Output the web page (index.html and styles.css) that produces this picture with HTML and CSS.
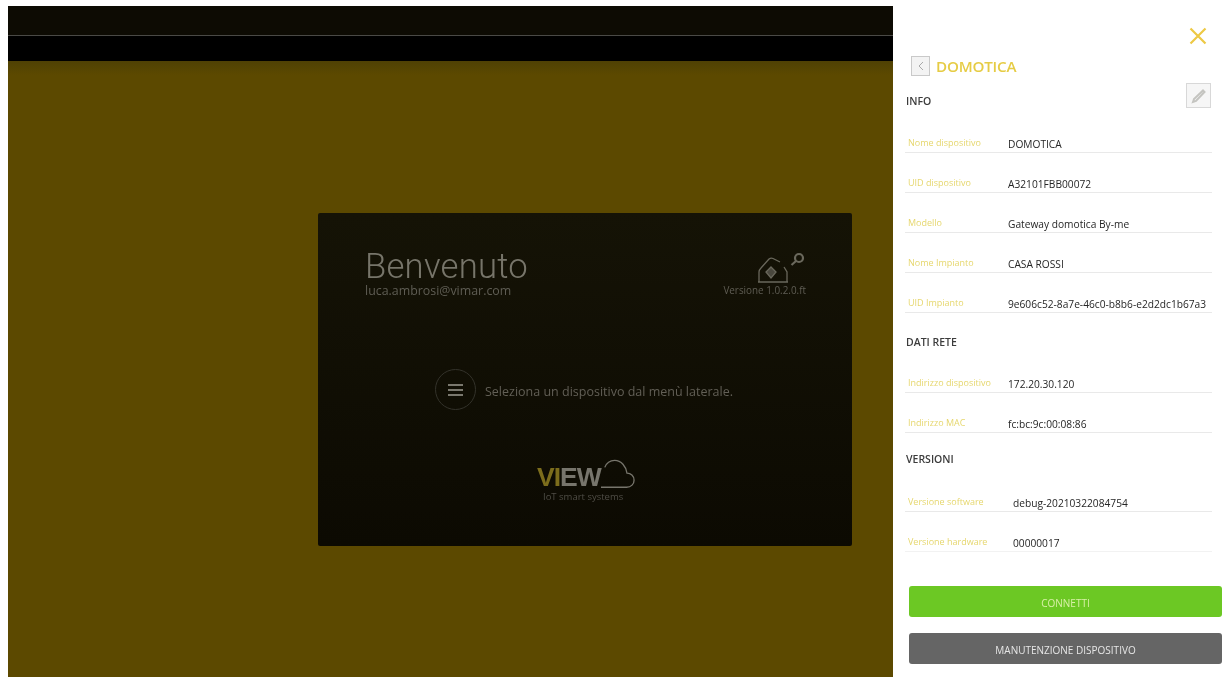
FILE: index.html
```html
<!DOCTYPE html>
<html lang="it">

<head>
    <meta charset="utf-8" />
    <title>VIEW - DOMOTICA</title>
    <link rel="stylesheet" href="styles.css">
</head>

<body>
    <div class="shell">
        <div class="main">
            <div class="topbar">
                <div class="topbar-upper"></div>
                <div class="topbar-lower"></div>
            </div>
            <div class="stage">
                <div class="welcome">
                    <div class="welcome-head">
                        <div class="welcome-user">
                            <h1>Benvenuto</h1>
                            <div class="email">luca.ambrosi@vimar.com</div>
                        </div>
                        <div class="welcome-version">
                            <svg class="home-icon" width="48" height="34" viewBox="0 0 48 34" fill="none" stroke="#6a685c" stroke-width="1.3">
                                <path d="M1 32 H31 M2 32 V22 Q2 20 4 18 L12 9 Q14 7.5 16 8.5 L23 12 M30 32 V22 L27 17" />
                                <path d="M14 17 L19 22 L14 28 L9 22 Z" fill="#4a483e" />
                                <path d="M34.5 15 L39 11" stroke-width="2.2" />
                                <circle cx="42" cy="8" r="4" stroke-width="2.2" />
                            </svg>
                            <div class="version-text">Versione 1.0.2.0.ft</div>
                        </div>
                    </div>
                    <div class="hint">
                        <div class="menu-circle">
                            <span></span>
                            <span></span>
                            <span></span>
                        </div>
                        <div class="hint-text">Seleziona un dispositivo dal menù laterale.</div>
                    </div>
                    <div class="logo">
                        <div class="logo-mark">
                            <div class="logo-word"><span class="logo-vi">VI</span>EW</div>
                            <svg class="logo-cloud" width="34" height="32" viewBox="0 0 36 32" fill="none" stroke="#77756c" stroke-width="1.4">
                                <path d="M0 30 H27 C32 30 35 26.5 35 22.5 C35 18 31.5 15 27.5 15 C26.5 8 21.5 1.5 14.5 1.5 C9 1.5 5.5 5 4 9" />
                            </svg>
                        </div>
                        <div class="logo-sub">IoT smart systems</div>
                    </div>
                </div>
            </div>
        </div>

        <div class="panel">
            <div class="panel-close">
                <svg width="18" height="18" viewBox="0 0 18 18" stroke="#edc945" stroke-width="2.2" fill="none">
                    <path d="M1.5 1.5 L16.5 16.5 M16.5 1.5 L1.5 16.5" />
                </svg>
            </div>
            <div class="panel-title">
                <div class="back-btn">
                    <svg width="8" height="10" viewBox="0 0 8 10" fill="none" stroke="#a9a9a9" stroke-width="1">
                        <path d="M6 1 L2 5 L6 9" />
                    </svg>
                </div>
                <h2>DOMOTICA</h2>
            </div>
            <div class="section section-info">
                <span>INFO</span>
                <div class="edit-btn">
                    <svg width="16" height="16" viewBox="0 0 16 16" fill="none" stroke="#c4c4c0" stroke-width="2">
                        <path d="M2 14 L3 11 L12 2.5 L13.5 4 L5 13 Z" />
                    </svg>
                </div>
            </div>

            <div class="row"><div class="label">Nome dispositivo</div><div class="value">DOMOTICA</div></div>
            <div class="row"><div class="label">UID dispositivo</div><div class="value">A32101FBB00072</div></div>
            <div class="row"><div class="label">Modello</div><div class="value">Gateway domotica By-me</div></div>
            <div class="row"><div class="label">Nome Impianto</div><div class="value">CASA ROSSI</div></div>
            <div class="row"><div class="label">UID Impianto</div><div class="value">9e606c52-8a7e-46c0-b8b6-e2d2dc1b67a3</div></div>

            <div class="section section-net"><span>DATI RETE</span></div>
            <div class="row"><div class="label">Indirizzo dispositivo</div><div class="value">172.20.30.120</div></div>
            <div class="row"><div class="label">Indirizzo MAC</div><div class="value">fc:bc:9c:00:08:86</div></div>

            <div class="section section-ver"><span>VERSIONI</span></div>
            <div class="row row-ver"><div class="label">Versione software</div><div class="value">debug-20210322084754</div></div>
            <div class="row row-ver row-plain"><div class="label">Versione hardware</div><div class="value">00000017</div></div>

            <div class="actions">
                <button class="btn btn-green">CONNETTI</button>
                <button class="btn btn-grey">MANUTENZIONE DISPOSITIVO</button>
            </div>
        </div>
    </div>
</body>

</html>
```

FILE: styles.css
```css
html,
body {
    margin: 0;
    padding: 0;
    height: 679px;
    overflow: hidden;
    background: #fff;
}

body {
    font-family: "Open Sans", "Liberation Sans", sans-serif;
}

.shell {
    display: flex;
    height: 671px;
    padding: 6px 0 2px 8px;
}

.main {
    flex: none;
    width: 885px;
    display: flex;
    flex-direction: column;
}

.topbar-upper {
    height: 29px;
    background: #0d0b03;
    border-bottom: 1px solid #4a4a46;
}

.topbar-lower {
    height: 25px;
    background: #000;
}

.stage {
    flex: 1;
    padding: 152px 0 0 310px;
    background: linear-gradient(#4f4104, #5c4900 14px);
}

.welcome {
    width: 534px;
    height: 333px;
    box-sizing: border-box;
    padding: 37px 46px 0 47px;
    border-radius: 2px;
    background: linear-gradient(#151306, #0c0a02);
    display: flex;
    flex-direction: column;
    filter: blur(0.7px);
}

.welcome-head {
    display: flex;
    justify-content: space-between;
}

h1 {
    margin: 0;
    font-family: Roboto, "Open Sans", sans-serif;
    font-weight: 300;
    font-size: 34.7px;
    line-height: 33px;
    letter-spacing: 0.2px;
    color: #77756a;
}

.email {
    font-size: 12.4px;
    line-height: 15px;
    color: #5f5d54;
}

.welcome-version {
    display: flex;
    flex-direction: column;
    align-items: flex-end;
}

.home-icon {
    margin-right: 1px;
}

.version-text {
    font-size: 9.9px;
    line-height: 12px;
    color: #5f5d54;
}

.hint {
    display: flex;
    align-items: center;
    gap: 9px;
    margin: 71px 0 0 70px;
}

.menu-circle {
    width: 39px;
    height: 39px;
    border: 1.5px solid #33322a;
    border-radius: 50%;
    display: flex;
    flex-direction: column;
    align-items: center;
    justify-content: center;
    gap: 3px;
}

.menu-circle span {
    width: 15px;
    height: 2px;
    background: #7a786e;
}

.hint-text {
    font-size: 12.5px;
    color: #625f56;
    padding-top: 3px;
}

.logo {
    margin: 48px 0 0 172px;
    width: 100px;
}

.logo-mark {
    display: flex;
    align-items: flex-end;
    height: 32px;
}

.logo-word {
    font-family: "Liberation Sans", sans-serif;
    font-weight: 700;
    font-size: 26.5px;
    line-height: 26px;
    letter-spacing: -1px;
    color: #77756c;
}

.logo-vi {
    color: #7c6d1c;
}

.logo-cloud {
    flex: none;
}

.logo-sub {
    margin: 1px 0 0 6px;
    font-size: 9.5px;
    line-height: 12px;
    color: #4f4d46;
    white-space: nowrap;
}

.panel {
    flex: none;
    width: 333px;
    box-sizing: border-box;
    padding: 0 4px 0 12px;
    background: #fff;
    filter: blur(0.6px);
}

.panel-close {
    display: flex;
    justify-content: flex-end;
    height: 50px;
    padding: 21px 15px 0 0;
    box-sizing: border-box;
}

.panel-title {
    display: flex;
    align-items: center;
    gap: 6px;
    height: 19px;
    margin-left: 6px;
}

.back-btn {
    width: 17px;
    height: 18px;
    border: 1px solid #c9c9c9;
    background: #f3f3f3;
    display: flex;
    align-items: center;
    justify-content: center;
}

h2 {
    margin: 0;
    font-size: 15.2px;
    font-weight: 600;
    letter-spacing: -0.2px;
    color: #e6cc45;
}

.section {
    display: flex;
    align-items: flex-end;
    box-sizing: border-box;
    width: 307px;
    font-size: 10.5px;
    font-weight: 600;
    line-height: 15px;
    color: #3c3c3c;
    margin-left: 1px;
}

.section-info {
    justify-content: space-between;
    align-items: flex-start;
    height: 38px;
    padding-top: 8px;
}

.section-info span {
    margin-top: 11px;
}

.section-net {
    height: 40px;
    padding-bottom: 3px;
}

.section-ver {
    height: 39px;
    padding-bottom: 5px;
}

.edit-btn {
    width: 23px;
    height: 23px;
    margin-right: 2px;
    border: 1px solid #d8d8d8;
    background: #f6f6f6;
    display: flex;
    align-items: center;
    justify-content: center;
}

.row {
    display: flex;
    align-items: flex-end;
    width: 307px;
    height: 40px;
    box-sizing: border-box;
    border-bottom: 1px solid #e9e9e9;
}

.label {
    width: 103px;
    flex: none;
    padding: 0 0 3px 3px;
    box-sizing: border-box;
    font-size: 9px;
    font-weight: 500;
    line-height: 12px;
    color: #e6d76e;
    white-space: nowrap;
}

.value {
    padding-bottom: 1px;
    font-size: 10.2px;
    font-weight: 500;
    line-height: 14px;
    color: #262626;
    white-space: nowrap;
}

.row-ver .label {
    width: 108px;
}

.row-plain {
    border-bottom-color: #f2f2f2;
}

.actions {
    display: flex;
    flex-direction: column;
    gap: 16px;
    margin: 34px 0 0 4px;
}

.btn {
    width: 313px;
    height: 31px;
    padding: 3px 0 0;
    border: 0;
    border-radius: 3px;
    font-family: "Open Sans", "Liberation Sans", sans-serif;
    font-size: 10px;
    color: #fff;
}

.btn-green {
    background: #6cc824;
    color: #d9f0a8;
}

.btn-grey {
    background: #656565;
    color: #e6e6e6;
}
```
